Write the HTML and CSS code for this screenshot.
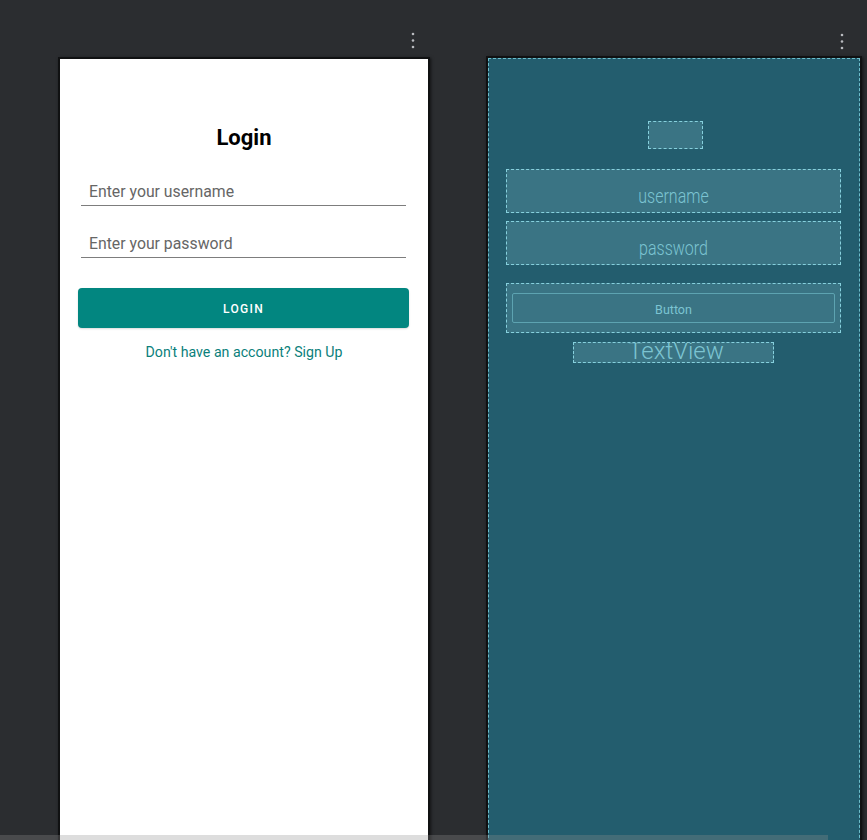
FILE: index.html
```html
<!DOCTYPE html>
<html lang="en">
<head>
<meta charset="utf-8">
<title>Login layout preview</title>
<link rel="stylesheet" href="styles.css">
</head>
<body>
<div class="canvas">
  <section class="device device-design">
    <div class="device-bar">
      <svg class="kebab" width="4" height="18" viewBox="0 0 4 18"><circle cx="2" cy="3" r="1.3"/><circle cx="2" cy="9.5" r="1.3"/><circle cx="2" cy="16" r="1.3"/></svg>
    </div>
    <div class="frame">
      <div class="screen">
        <h1 class="title">Login</h1>
        <div class="field">Enter your username</div>
        <div class="field field-second">Enter your password</div>
        <div class="login-btn">LOGIN</div>
        <div class="signup">Don't have an account? Sign Up</div>
      </div>
    </div>
  </section>
  <section class="device device-blueprint">
    <div class="device-bar">
      <svg class="kebab" width="4" height="18" viewBox="0 0 4 18"><circle cx="2" cy="3" r="1.3"/><circle cx="2" cy="9.5" r="1.3"/><circle cx="2" cy="16" r="1.3"/></svg>
    </div>
    <div class="frame">
      <div class="blueprint">
        <div class="bp-box bp-title"></div>
        <div class="bp-box bp-input"><span class="bp-text">username</span></div>
        <div class="bp-box bp-input bp-input-second"><span class="bp-text">password</span></div>
        <div class="bp-box bp-button"><div class="bp-button-inner">Button</div></div>
        <div class="bp-box bp-textview"><span class="bp-tv-text">TextView</span></div>
      </div>
    </div>
  </section>
</div>
<div class="hscroll"></div>
</body>
</html>
```
FILE: styles.css
```css
html, body {
  margin: 0;
  padding: 0;
  height: 100%;
  overflow: hidden;
  background: #2b2d30;
  font-family: Roboto, "Liberation Sans", sans-serif;
}

.canvas {
  display: flex;
  align-items: flex-start;
  gap: 56px;
  padding-left: 58px;
}

.device {
  display: flex;
  flex-direction: column;
}

.device-design { width: 372px; }
.device-blueprint { width: 376px; }

.device-bar {
  height: 56px;
  display: flex;
  justify-content: flex-end;
}

.device-design .device-bar {
  height: 57px;
}

.kebab {
  margin-top: 32px;
  margin-right: 15px;
  fill: #b9bbbf;
}

.device-design .kebab {
  margin-top: 31px;
}

.device-blueprint .kebab {
  margin-right: 18px;
}

.frame {
  border: 2px solid #101112;
  box-shadow: 1px 1px 3px rgba(0, 0, 0, 0.6);
}

/* ---------- design screen ---------- */
.screen {
  background: #ffffff;
  height: 800px;
  padding-top: 66px;
  box-sizing: border-box;
}

.title {
  margin: 0;
  font-size: 22px;
  line-height: 26px;
  font-weight: 700;
  color: #000;
  text-align: center;
}

.field {
  margin: 32px 22px 0 21px;
  padding: 0 8px 4px;
  font-size: 15.8px;
  line-height: 18px;
  color: #666666;
  border-bottom: 1px solid #7d7d7d;
}

.field-second {
  margin-top: 29px;
}

.login-btn {
  margin: 30px 19px 0 18px;
  height: 40px;
  border-radius: 4px;
  background: #028680;
  color: #ffffff;
  font-size: 12px;
  font-weight: 500;
  letter-spacing: 1.3px;
  display: flex;
  align-items: center;
  justify-content: center;
  padding-top: 1px;
  box-sizing: border-box;
  box-shadow: 0 1px 2px rgba(0, 0, 0, 0.15);
}

.signup {
  margin-top: 16px;
  font-size: 14.2px;
  line-height: 17px;
  color: #0b7f7b;
  text-align: center;
}

/* ---------- blueprint screen ---------- */
.blueprint {
  background: #235d6e;
  height: 800px;
  border: 1px dashed #6dbfcd;
  box-sizing: border-box;
  display: flex;
  flex-direction: column;
}

.bp-box {
  box-sizing: border-box;
  border: 1px dashed #86d0dd;
  background: #3a7484;
}

.bp-title {
  width: 55px;
  height: 28px;
  margin: 62px auto 0;
  position: relative;
  left: 1px;
}

.bp-input {
  height: 44px;
  margin: 20px 18px 0 17px;
  display: flex;
  justify-content: center;
  align-items: center;
  padding-top: 11px;
}

.bp-input-second {
  margin-top: 8px;
}

.bp-text {
  display: inline-block;
  font-size: 16px;
  font-weight: 300;
  line-height: 16px;
  color: #7cc4d2;
  transform: scaleY(1.25);
}

.bp-button {
  height: 50px;
  margin: 18px 18px 0 17px;
  padding: 9px 5px;
}

.bp-button-inner {
  height: 30px;
  box-sizing: border-box;
  border: 1px solid #5da3b1;
  border-radius: 2px;
  display: flex;
  align-items: center;
  justify-content: center;
  font-size: 12.5px;
  color: #7cc4d2;
  padding-top: 2px;
}

.bp-textview {
  width: 201px;
  height: 21px;
  margin: 9px auto 0;
  overflow: hidden;
  text-align: center;
  position: relative;
  left: -1px;
}

.bp-tv-text {
  display: block;
  font-size: 24px;
  font-weight: 300;
  line-height: 17px;
  color: #7cc4d2;
  padding-left: 6px;
}

/* horizontal scrollbar overlay at the bottom of the viewport */
.hscroll {
  position: fixed;
  left: 0;
  bottom: 0;
  width: 828px;
  height: 5px;
  background: rgba(144, 144, 144, 0.3);
}
```
